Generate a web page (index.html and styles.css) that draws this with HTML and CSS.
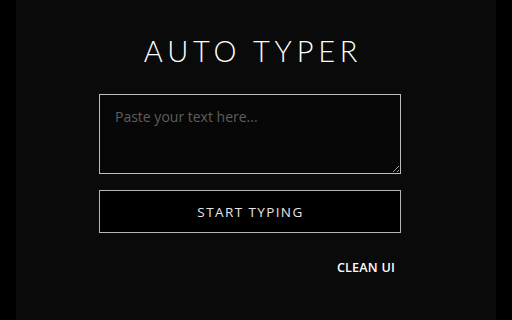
FILE: index.html
```html
<!DOCTYPE html>
<html>
<head>
<meta charset="utf-8">
<link rel="stylesheet" href="styles.css">
</head>
<body>
<div class="app">
  <div class="panel">
    <h1 class="title">AUTO TYPER</h1>
    <textarea class="input" placeholder="Paste your text here..."></textarea>
    <button class="start">START TYPING</button>
    <div class="footer">CLEAN UI</div>
  </div>
</div>
</body>
</html>
```
FILE: styles.css
```css
html, body {
  margin: 0;
  padding: 0;
  background: #000;
  height: 100%;
}
.app {
  width: 480px;
  height: 320px;
  margin: 0 auto;
  background: #0a0a0a;
  box-sizing: border-box;
  padding: 0 95px 0 83px;
  font-family: "Open Sans", sans-serif;
}
.panel {
  display: flex;
  flex-direction: column;
  width: 302px;
}
.title {
  margin: 34px 0 0 0;
  font-family: Lato, sans-serif;
  font-weight: 300;
  font-size: 29px;
  line-height: 34px;
  letter-spacing: 4.8px;
  color: #fff;
  text-align: center;
  padding-left: 6px;
}
.input {
  margin-top: 26px;
  height: 80px;
  box-sizing: border-box;
  background: #070707;
  border: 1px solid #bdbdbd;
  border-radius: 0;
  color: #ddd;
  padding: 12px 15px;
  font-family: "Open Sans", sans-serif;
  font-size: 14px;
  outline: none;
  resize: vertical;
}
.input::placeholder {
  color: #5e5e5e;
}
.start {
  margin-top: 16px;
  height: 43px;
  box-sizing: border-box;
  background: #000;
  border: 1px solid #b5b5b5;
  border-radius: 0;
  color: #e6e6e6;
  font-family: "Open Sans", sans-serif;
  font-size: 13.5px;
  letter-spacing: 1.4px;
  padding: 0 0 0 1px;
}
.footer {
  margin-top: 26px;
  align-self: flex-end;
  margin-right: 6px;
  font-family: "Open Sans", sans-serif;
  font-weight: 600;
  font-size: 12.6px;
  letter-spacing: 0.2px;
  color: #fff;
}
```
